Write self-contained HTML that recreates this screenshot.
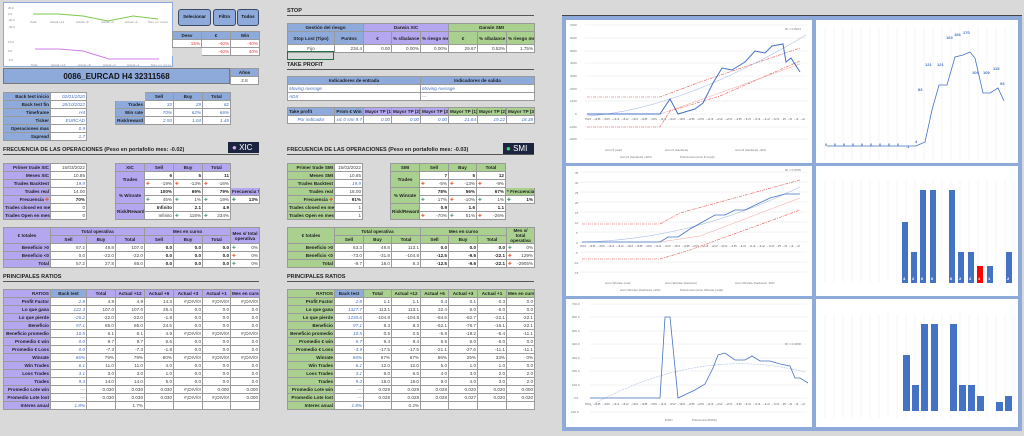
<!DOCTYPE html>
<html><head><meta charset="utf-8">
<style>
*{margin:0;padding:0;box-sizing:border-box}
body{width:1024px;height:436px;background:#d9d9d9;font-family:"Liberation Sans",sans-serif;position:relative;overflow:hidden}
.a{position:absolute}
table{position:absolute;border-collapse:collapse;table-layout:fixed;font-size:4.6px}
td{border:0.5px solid #9a9a9a;height:8px;line-height:7px;padding:0 1px;text-align:right;white-space:nowrap;overflow:hidden;background:#fff;color:#444}
td.l{background:#8eaadb;font-weight:bold;color:#222}
td.p{background:#b4a7f0;font-weight:bold;color:#222;text-align:center}
td.pl{background:#b4a7f0;font-weight:bold;color:#222}
td.g{background:#a9d08e;font-weight:bold;color:#222;text-align:center}
td.gl{background:#a9d08e;font-weight:bold;color:#222}
td.b{background:#8eaadb;font-weight:bold;color:#222;text-align:center}
td.i{color:#4472c4;font-style:italic}
td.r{color:#e04040}
td.k{font-weight:bold;color:#222}
.h{position:absolute;font-size:5.5px;font-weight:bold;color:#222;border-bottom:1px solid #555;padding-bottom:1px}
.btn{position:absolute;background:#8eaadb;border:1.5px solid #3a4a66;border-radius:3px;font-size:4.5px;font-weight:bold;text-align:center;line-height:13px;color:#111}
.w{position:absolute;background:#fff}
</style></head><body>

<div class="w" style="left:3px;top:2px;width:170px;height:65px;border:1px solid #8eaadb"></div>
<svg class="a" style="left:3px;top:2px" width="170" height="65">
<g font-size="3" fill="#888"><text x="5" y="7">20.0</text><text x="5" y="13">0.0</text><text x="5" y="19">-20.0</text><text x="5" y="26">-40.0</text>
<text x="5" y="41">10.0</text><text x="5" y="50">0.0</text><text x="5" y="59">-5.0</text>
<text x="27" y="21">Total</text><text x="47" y="21">Actual +12</text><text x="73" y="21">Actual +6</text><text x="98" y="21">Actual +3</text><text x="122" y="21">Actual +1</text><text x="145" y="21" textLength="20">Mes en curso</text>
<text x="28" y="64">Total</text><text x="48" y="64">Actual +12</text><text x="75" y="64">Actual +6</text><text x="100" y="64">Actual +3</text><text x="124" y="64">Actual +1</text><text x="148" y="64" textLength="20">Mes en curso</text></g>
<polyline points="30,12 55,12 80,14 105,19 130,14 155,17" fill="none" stroke="#7dc94e" stroke-width="1"/>
<polyline points="32,47 56,47 80,49 106,57 130,57 156,57" fill="none" stroke="#d27ee8" stroke-width="1"/>
</svg>

<div class="btn" style="left:178px;top:9px;width:33px;height:17px">Selecionar</div>
<div class="btn" style="left:213px;top:9px;width:23px;height:17px">Filtro</div>
<div class="btn" style="left:237px;top:9px;width:22px;height:17px">Todos</div>

<table style="left:172px;top:31px;width:87px"><colgroup><col style="width:29px"><col style="width:29px"><col style="width:29px"></colgroup>
<tr><td class="b">Desv</td><td class="b">€</td><td class="b">Win</td></tr>
<tr><td class="r">15%</td><td class="r">-40%</td><td class="r">-40%</td></tr>
<tr><td style="background:#d9d9d9;border-color:#d9d9d9"></td><td class="r">-40%</td><td class="r">40%</td></tr></table>

<div class="a" style="left:3px;top:68px;width:227px;height:16px;background:#8eaadb;border:0.5px solid #777;font-size:8px;font-weight:bold;text-align:center;line-height:16px;color:#111">0086_EURCAD H4 32311568</div>
<table style="left:230px;top:68px;width:29px"><tr><td class="b">Años</td></tr><tr><td style="text-align:center">2.8</td></tr></table>

<table style="left:3px;top:92px;width:83px"><colgroup><col style="width:47px"><col style="width:36px"></colgroup>
<tr><td class="l">Back test inicio</td><td class="i">02/01/2020</td></tr>
<tr><td class="l">Back test fin</td><td class="i">28/10/2022</td></tr>
<tr><td class="l">Timeframe</td><td class="i">H4</td></tr>
<tr><td class="l">Ticker</td><td class="i">EURCAD</td></tr>
<tr><td class="l">Operaciones mas</td><td class="i">0.9</td></tr>
<tr><td class="l">Sapread</td><td class="i">1.7</td></tr></table>

<table style="left:115px;top:92px;width:115px"><colgroup><col style="width:29px"><col style="width:29px"><col style="width:29px"><col style="width:28px"></colgroup>
<tr><td style="background:#d9d9d9;border-color:#d9d9d9"></td><td class="b">Sell</td><td class="b">Buy</td><td class="b">Total</td></tr>
<tr><td class="l">Trades</td><td class="i">33</td><td class="i">29</td><td class="i">62</td></tr>
<tr><td class="l">Win rate</td><td class="i">70%</td><td class="i">62%</td><td class="i">66%</td></tr>
<tr><td class="l">Risk/reward</td><td class="i">2.93</td><td class="i">1.04</td><td class="i">1.45</td></tr></table>

<div class="a" style="left:228px;top:142px;width:31px;height:11px;background:#1c2540;color:#fff;font-size:8px;line-height:11px;padding-left:4px"><span style="color:#d8a8f0">●</span> XIC</div>
<div class="h" style="left:3px;top:147px;width:256px">FRECUENCIA DE LAS OPERACIONES (Peso en portafolio mes: -0.02)</div>

<table style="left:3px;top:163px;width:83px"><colgroup><col style="width:47px"><col style="width:36px"></colgroup>
<tr><td class="pl">Primer trade XIC</td><td>15/03/2022</td></tr>
<tr><td class="pl">Meses XIC</td><td>10.85</td></tr>
<tr><td class="pl">Trades Backtest</td><td class="i">19.9</td></tr>
<tr><td class="pl">Trades real</td><td>14.00</td></tr>
<tr><td class="pl">Frecuencia <span style="color:#e05a2a">✚</span></td><td class="k">70%</td></tr>
<tr><td class="pl">Trades closed en mes</td><td>0</td></tr>
<tr><td class="pl">Trades Open en mes</td><td>0</td></tr></table>

<table style="left:115px;top:163px;width:144px"><colgroup><col style="width:29px"><col style="width:29px"><col style="width:29px"><col style="width:28px"><col style="width:29px"></colgroup>
<tr><td class="p">XIC</td><td class="p">Sell</td><td class="p">Buy</td><td class="p">Total</td><td style="background:#d9d9d9;border-color:#d9d9d9"></td></tr>
<tr><td class="p" rowspan="2">Trades</td><td class="k">6</td><td class="k">5</td><td class="k">11</td><td style="background:#d9d9d9;border-color:#d9d9d9"></td></tr>
<tr><td><span style="color:#e05a2a;float:left">✚</span>-19%</td><td><span style="color:#e05a2a;float:left">✚</span>-13%</td><td><span style="color:#e05a2a;float:left">✚</span>-16%</td><td style="background:#d9d9d9;border-color:#d9d9d9"></td></tr>
<tr><td class="p" rowspan="2">% Winrate</td><td class="k">100%</td><td class="k">69%</td><td class="k">79%</td><td class="p">Frecuencia T</td></tr>
<tr><td><span style="color:#4a9a70;float:left">✚</span>45%</td><td><span style="color:#4a9a70;float:left">✚</span>1%</td><td><span style="color:#4a9a70;float:left">✚</span>19%</td><td class="k"><span style="color:#4a9a70;float:left">✚</span>13%</td></tr>
<tr><td class="p" rowspan="2">Risk/Reward</td><td class="k">Infinito</td><td class="k">2.1</td><td class="k">4.9</td><td style="background:#d9d9d9;border-color:#d9d9d9"></td></tr>
<tr><td>Infinito</td><td><span style="color:#4a9a70;float:left">✚</span>118%</td><td><span style="color:#4a9a70;float:left">✚</span>234%</td><td style="background:#d9d9d9;border-color:#d9d9d9"></td></tr></table>

<table style="left:3px;top:227px;width:256px"><colgroup><col style="width:47px"><col style="width:36px"><col style="width:29px"><col style="width:29px"><col style="width:29px"><col style="width:29px"><col style="width:28px"><col style="width:29px"></colgroup>
<tr><td class="p" rowspan="2">€ totales</td><td class="p" colspan="3">Total operativa</td><td class="p" colspan="3">Mes en curso</td><td class="p" rowspan="2" style="white-space:normal;line-height:5px">Mes s/ total operativa</td></tr>
<tr><td class="p">Sell</td><td class="p">Buy</td><td class="p">Total</td><td class="p">Sell</td><td class="p">Buy</td><td class="p">Total</td></tr>
<tr><td class="pl">Beneficio &gt;0</td><td>57.2</td><td>49.8</td><td>107.0</td><td class="k">0.0</td><td class="k">0.0</td><td class="k">0.0</td><td><span style="color:#4a9a70;float:left">✚</span>0%</td></tr>
<tr><td class="pl">Beneficio &lt;0</td><td>0.0</td><td>-22.0</td><td>-22.0</td><td class="k">0.0</td><td class="k">0.0</td><td class="k">0.0</td><td><span style="color:#e05a2a;float:left">✚</span>0%</td></tr>
<tr><td class="pl">Total</td><td>57.2</td><td>27.8</td><td>85.0</td><td class="k">0.0</td><td class="k">0.0</td><td class="k">0.0</td><td><span style="color:#4a9a70;float:left">✚</span>0%</td></tr></table>

<div class="h" style="left:3px;top:274px;width:256px">PRINCIPALES RATIOS</div>

<table style="left:3px;top:289px;width:256px"><colgroup><col style="width:47px"><col style="width:36px"><col style="width:29px"><col style="width:29px"><col style="width:29px"><col style="width:29px"><col style="width:28px"><col style="width:29px"></colgroup>
<tr><td class="pl">RATIOS</td><td class="b">Back test</td><td class="p">Total</td><td class="p">Actual +12</td><td class="p">Actual +6</td><td class="p">Actual +3</td><td class="p">Actual +1</td><td class="p">Mes en curso</td></tr>
<tr><td class="pl">Profit Factor</td><td class="i">2.8</td><td>4.9</td><td>4.9</td><td>14.3</td><td>#¡DIV/0!</td><td>#¡DIV/0!</td><td>#¡DIV/0!</td></tr>
<tr><td class="pl">Lo que gana</td><td class="i">122.3</td><td>107.0</td><td>107.0</td><td>26.4</td><td>0.0</td><td>0.0</td><td>0.0</td></tr>
<tr><td class="pl">Lo que pierde</td><td class="i">-26.2</td><td>-22.0</td><td>-22.0</td><td>-1.8</td><td>0.0</td><td>0.0</td><td>0.0</td></tr>
<tr><td class="pl">Beneficio</td><td class="i">97.1</td><td>85.0</td><td>85.0</td><td>24.5</td><td>0.0</td><td>0.0</td><td>0.0</td></tr>
<tr><td class="pl">Beneficio promedio</td><td class="i">10.5</td><td>6.1</td><td>6.1</td><td>4.9</td><td>#¡DIV/0!</td><td>#¡DIV/0!</td><td>#¡DIV/0!</td></tr>
<tr><td class="pl">Promedio € win</td><td class="i">0.0</td><td>9.7</td><td>9.7</td><td>6.6</td><td>0.0</td><td>0.0</td><td>0.0</td></tr>
<tr><td class="pl">Promedio € Loss</td><td class="i">0.0</td><td>-7.3</td><td>-7.3</td><td>-1.8</td><td>0.0</td><td>0.0</td><td>0.0</td></tr>
<tr><td class="pl">Winrate</td><td class="i">66%</td><td>79%</td><td>79%</td><td>80%</td><td>#¡DIV/0!</td><td>#¡DIV/0!</td><td>#¡DIV/0!</td></tr>
<tr><td class="pl">Win Trades</td><td class="i">6.1</td><td>11.0</td><td>11.0</td><td>4.0</td><td>0.0</td><td>0.0</td><td>0.0</td></tr>
<tr><td class="pl">Loss Trades</td><td class="i">3.1</td><td>3.0</td><td>3.0</td><td>1.0</td><td>0.0</td><td>0.0</td><td>0.0</td></tr>
<tr><td class="pl">Trades</td><td class="i">9.3</td><td>14.0</td><td>14.0</td><td>5.0</td><td>0.0</td><td>0.0</td><td>0.0</td></tr>
<tr><td class="pl">Promedio Lote win</td><td class="i">---</td><td>0.030</td><td>0.030</td><td>0.030</td><td>#¡DIV/0!</td><td>0.000</td><td>0.000</td></tr>
<tr><td class="pl">Promedio Lote lost</td><td class="i">---</td><td>0.030</td><td>0.030</td><td>0.030</td><td>#¡DIV/0!</td><td>#¡DIV/0!</td><td>0.000</td></tr>
<tr><td class="pl">Interes anual</td><td class="i">1.8%</td><td></td><td>1.7%</td><td></td><td></td><td></td><td></td></tr></table>

<div class="h" style="left:287px;top:8px;width:247px">STOP</div>
<table style="left:287px;top:23px;width:247px"><colgroup><col style="width:47px"><col style="width:29px"><col style="width:28px"><col style="width:29px"><col style="width:28px"><col style="width:29px"><col style="width:29px"><col style="width:28px"></colgroup>
<tr><td class="b" colspan="2">Gestión del riesgo</td><td class="p" colspan="3">Darwin XIC</td><td class="g" colspan="3">Darwin SMI</td></tr>
<tr style="height:13px"><td class="b">Stop Lost (Tipo)</td><td class="b">Puntos</td><td class="p">€</td><td class="p">% s/balance</td><td class="p">% riesgo mes</td><td class="g">€</td><td class="g">% s/balance</td><td class="g">% riesgo mes</td></tr>
<tr><td style="text-align:center">Fijo</td><td>234.4</td><td>0.00</td><td>0.00%</td><td>0.00%</td><td>29.67</td><td>0.53%</td><td>1.75%</td></tr></table>
<div class="a" style="left:287px;top:51px;width:47px;height:9px;border:1px solid #217346"></div>
<div class="h" style="left:287px;top:62px;width:247px">TAKE PROFIT</div>
<table style="left:287px;top:76px;width:247px"><colgroup><col style="width:133px"><col style="width:114px"></colgroup>
<tr><td class="b">Indicadores de entrada</td><td class="b">Indicadores de salida</td></tr>
<tr><td class="i" style="text-align:left">Moving Average</td><td class="i" style="text-align:left">Moving Average</td></tr>
<tr><td class="i" style="text-align:left">ADX</td><td class="i" style="text-align:left">---</td></tr></table>
<table style="left:287px;top:107px;width:247px"><colgroup><col style="width:47px"><col style="width:29px"><col style="width:28px"><col style="width:29px"><col style="width:28px"><col style="width:29px"><col style="width:29px"><col style="width:28px"></colgroup>
<tr><td class="l" style="text-align:left">Take profit</td><td class="b">Prom € Win</td><td class="p">Mayor TP (1)</td><td class="p">Mayor TP (2)</td><td class="p">Mayor TP (3)</td><td class="g">Mayor TP (1)</td><td class="g">Mayor TP (2)</td><td class="g">Mayor TP (3)</td></tr>
<tr><td class="i" style="text-align:center">Por indicador</td><td class="i">xic 0 smi 9.7</td><td class="i">0.00</td><td class="i">0.00</td><td class="i">0.00</td><td class="i">21.64</td><td class="i">19.22</td><td class="i">18.38</td></tr></table>

<div class="a" style="left:503px;top:143px;width:31px;height:12px;background:#1c2540;color:#fff;font-size:8px;line-height:12px;padding-left:3px"><span style="color:#3ed46a">●</span> SMI</div>
<div class="h" style="left:287px;top:147px;width:247px">FRECUENCIA DE LAS OPERACIONES (Peso en portafolio mes: -0.03)</div>

<table style="left:287px;top:163px;width:75px"><colgroup><col style="width:47px"><col style="width:28px"></colgroup>
<tr><td class="gl">Primer trade SMI</td><td>15/03/2022</td></tr>
<tr><td class="gl">Meses SMI</td><td>10.85</td></tr>
<tr><td class="gl">Trades Backtest</td><td class="i">19.9</td></tr>
<tr><td class="gl">Trades real</td><td>18.00</td></tr>
<tr><td class="gl">Frecuencia <span style="color:#e05a2a">✚</span></td><td class="k">91%</td></tr>
<tr><td class="gl">Trades closed en mes</td><td>1</td></tr>
<tr><td class="gl">Trades Open en mes</td><td>1</td></tr></table>

<table style="left:390px;top:163px;width:144px"><colgroup><col style="width:29px"><col style="width:29px"><col style="width:28px"><col style="width:29px"><col style="width:29px"></colgroup>
<tr><td class="g">SMI</td><td class="g">Sell</td><td class="g">Buy</td><td class="g">Total</td><td style="background:#d9d9d9;border-color:#d9d9d9"></td></tr>
<tr><td class="g" rowspan="2">Trades</td><td class="k">7</td><td class="k">5</td><td class="k">12</td><td style="background:#d9d9d9;border-color:#d9d9d9"></td></tr>
<tr><td><span style="color:#e05a2a;float:left">✚</span>-5%</td><td><span style="color:#e05a2a;float:left">✚</span>-13%</td><td><span style="color:#e05a2a;float:left">✚</span>-9%</td><td style="background:#d9d9d9;border-color:#d9d9d9"></td></tr>
<tr><td class="g" rowspan="2">% Winrate</td><td class="k">78%</td><td class="k">56%</td><td class="k">67%</td><td class="g">* Frecuencia</td></tr>
<tr><td><span style="color:#4a9a70;float:left">✚</span>17%</td><td><span style="color:#e05a2a;float:left">✚</span>-10%</td><td><span style="color:#4a9a70;float:left">✚</span>1%</td><td class="k"><span style="color:#4a9a70;float:left">✚</span>1%</td></tr>
<tr><td class="g" rowspan="2">Risk/Reward</td><td class="k">0.9</td><td class="k">1.6</td><td class="k">1.1</td><td style="background:#d9d9d9;border-color:#d9d9d9"></td></tr>
<tr><td><span style="color:#e05a2a;float:left">✚</span>-70%</td><td><span style="color:#4a9a70;float:left">✚</span>51%</td><td><span style="color:#e05a2a;float:left">✚</span>-26%</td><td style="background:#d9d9d9;border-color:#d9d9d9"></td></tr></table>

<table style="left:287px;top:227px;width:247px"><colgroup><col style="width:47px"><col style="width:29px"><col style="width:28px"><col style="width:29px"><col style="width:28px"><col style="width:29px"><col style="width:29px"><col style="width:28px"></colgroup>
<tr><td class="g" rowspan="2">€ totales</td><td class="g" colspan="3">Total operativa</td><td class="g" colspan="3">Mes en curso</td><td class="g" rowspan="2" style="white-space:normal;line-height:5px">Mes s/ total operativa</td></tr>
<tr><td class="g">Sell</td><td class="g">Buy</td><td class="g">Total</td><td class="g">Sell</td><td class="g">Buy</td><td class="g">Total</td></tr>
<tr><td class="gl">Beneficio &gt;0</td><td>63.3</td><td>49.8</td><td>113.1</td><td class="k">0.0</td><td class="k">0.0</td><td class="k">0.0</td><td><span style="color:#4a9a70;float:left">✚</span>0%</td></tr>
<tr><td class="gl">Beneficio &lt;0</td><td>-73.0</td><td>-31.8</td><td>-104.8</td><td class="k">-12.5</td><td class="k">-9.6</td><td class="k">-22.1</td><td><span style="color:#e05a2a;float:left">✚</span>129%</td></tr>
<tr><td class="gl">Total</td><td>-9.7</td><td>18.0</td><td>8.3</td><td class="k">-12.5</td><td class="k">-9.6</td><td class="k">-22.1</td><td><span style="color:#e05a2a;float:left">✚</span>-2905%</td></tr></table>

<div class="h" style="left:287px;top:274px;width:247px">PRINCIPALES RATIOS</div>

<table style="left:287px;top:289px;width:247px"><colgroup><col style="width:47px"><col style="width:29px"><col style="width:28px"><col style="width:29px"><col style="width:28px"><col style="width:29px"><col style="width:29px"><col style="width:28px"></colgroup>
<tr><td class="gl">RATIOS</td><td class="b">Back test</td><td class="g">Total</td><td class="g">Actual +12</td><td class="g">Actual +6</td><td class="g">Actual +3</td><td class="g">Actual +1</td><td class="g">Mes en curso</td></tr>
<tr><td class="gl">Profit Factor</td><td class="i">2.8</td><td>1.1</td><td>1.1</td><td>0.4</td><td>0.1</td><td>0.3</td><td>0.0</td></tr>
<tr><td class="gl">Lo que gana</td><td class="i">1327.7</td><td>113.1</td><td>113.1</td><td>32.4</td><td>6.0</td><td>6.0</td><td>0.0</td></tr>
<tr><td class="gl">Lo que pierde</td><td class="i">-1230.6</td><td>-104.8</td><td>-104.8</td><td>-84.5</td><td>-82.7</td><td>-22.1</td><td>-22.1</td></tr>
<tr><td class="gl">Beneficio</td><td class="i">97.1</td><td>8.3</td><td>8.3</td><td>-52.1</td><td>-76.7</td><td>-16.1</td><td>-22.1</td></tr>
<tr><td class="gl">Beneficio promedio</td><td class="i">10.5</td><td>0.5</td><td>0.5</td><td>-5.8</td><td>-19.2</td><td>-5.4</td><td>-11.1</td></tr>
<tr><td class="gl">Promedio € win</td><td class="i">5.7</td><td>9.4</td><td>9.4</td><td>6.5</td><td>6.0</td><td>6.0</td><td>0.0</td></tr>
<tr><td class="gl">Promedio € Loss</td><td class="i">-3.9</td><td>-17.5</td><td>-17.5</td><td>-21.1</td><td>-27.6</td><td>-11.1</td><td>-11.1</td></tr>
<tr><td class="gl">Winrate</td><td class="i">66%</td><td>67%</td><td>67%</td><td>56%</td><td>25%</td><td>33%</td><td>0%</td></tr>
<tr><td class="gl">Win Trades</td><td class="i">6.1</td><td>12.0</td><td>12.0</td><td>5.0</td><td>1.0</td><td>1.0</td><td>0.0</td></tr>
<tr><td class="gl">Loss Trades</td><td class="i">3.1</td><td>6.0</td><td>6.0</td><td>4.0</td><td>3.0</td><td>2.0</td><td>2.0</td></tr>
<tr><td class="gl">Trades</td><td class="i">9.3</td><td>18.0</td><td>18.0</td><td>9.0</td><td>4.0</td><td>3.0</td><td>2.0</td></tr>
<tr><td class="gl">Promedio Lote win</td><td class="i">---</td><td>0.029</td><td>0.029</td><td>0.028</td><td>0.020</td><td>0.020</td><td>0.000</td></tr>
<tr><td class="gl">Promedio Lote lost</td><td class="i">---</td><td>0.028</td><td>0.028</td><td>0.028</td><td>0.027</td><td>0.020</td><td>0.020</td></tr>
<tr><td class="gl">Interes anual</td><td class="i">1.8%</td><td></td><td>0.2%</td><td></td><td></td><td></td><td></td></tr></table>

<div class="a" style="left:562px;top:15px;width:460px;height:416px;background:#8eaadb;border-top:1.5px solid #444"></div>
<div class="w" style="left:566px;top:20px;width:246px;height:143px"></div>
<div class="w" style="left:816px;top:20px;width:202px;height:143px"></div>
<div class="w" style="left:566px;top:166px;width:246px;height:130px"></div>
<div class="w" style="left:816px;top:166px;width:202px;height:130px"></div>
<div class="w" style="left:566px;top:299px;width:246px;height:128px"></div>
<div class="w" style="left:816px;top:299px;width:202px;height:128px"></div>

<svg class="a" style="left:0;top:0" width="1024" height="436">
<g stroke="#e6e6e6" stroke-width="0.5">
<line x1="585" x2="807" y1="25" y2="25"/><line x1="585" x2="807" y1="38" y2="38"/><line x1="585" x2="807" y1="51" y2="51"/><line x1="585" x2="807" y1="63" y2="63"/><line x1="585" x2="807" y1="76" y2="76"/><line x1="585" x2="807" y1="89" y2="89"/><line x1="585" x2="807" y1="101" y2="101"/><line x1="585" x2="807" y1="114" y2="114"/><line x1="585" x2="807" y1="127" y2="127"/><line x1="585" x2="807" y1="139" y2="139"/>
<line x1="580" x2="807" y1="172" y2="172"/><line x1="580" x2="807" y1="182" y2="182"/><line x1="580" x2="807" y1="192" y2="192"/><line x1="580" x2="807" y1="202" y2="202"/><line x1="580" x2="807" y1="212" y2="212"/><line x1="580" x2="807" y1="222" y2="222"/><line x1="580" x2="807" y1="232" y2="232"/><line x1="580" x2="807" y1="242" y2="242"/><line x1="580" x2="807" y1="252" y2="252"/><line x1="580" x2="807" y1="262" y2="262"/><line x1="580" x2="807" y1="272" y2="272"/>
<line x1="590" x2="807" y1="304" y2="304"/><line x1="590" x2="807" y1="317" y2="317"/><line x1="590" x2="807" y1="331" y2="331"/><line x1="590" x2="807" y1="344" y2="344"/><line x1="590" x2="807" y1="358" y2="358"/><line x1="590" x2="807" y1="371" y2="371"/><line x1="590" x2="807" y1="385" y2="385"/><line x1="590" x2="807" y1="398" y2="398"/><line x1="590" x2="807" y1="412" y2="412"/>
</g>
<g stroke="#ececec" stroke-width="0.5">
<path d="M825 27V160M834 27V160M843 27V160M852 27V160M861 27V160M870 27V160M879 27V160M888 27V160M897 27V160M906 27V160M915 27V160M924 27V160M933 27V160M942 27V160M951 27V160M960 27V160M969 27V160M978 27V160M987 27V160M996 27V160M1005 27V160"/>
<path d="M825 180V282M834 180V282M843 180V282M852 180V282M861 180V282M870 180V282M879 180V282M888 180V282M897 180V282M906 180V282M915 180V282M924 180V282M933 180V282M942 180V282M951 180V282M960 180V282M969 180V282M978 180V282M987 180V282M996 180V282M1005 180V282M1014 180V282"/>
<path d="M825 314V418M834 314V418M843 314V418M852 314V418M861 314V418M870 314V418M879 314V418M888 314V418M897 314V418M906 314V418M915 314V418M924 314V418M933 314V418M942 314V418M951 314V418M960 314V418M969 314V418M978 314V418M987 314V418M996 314V418M1005 314V418M1014 314V418"/>
</g>
<g font-size="3" fill="#777">
<text x="570" y="26">7000</text><text x="570" y="39">6000</text><text x="570" y="52">5000</text><text x="570" y="64">4000</text><text x="570" y="77">3000</text><text x="570" y="90">2000</text><text x="570" y="102">1000</text><text x="575" y="115">0</text><text x="569" y="128">-1000</text><text x="569" y="140">-2000</text>
<text x="585" y="120" textLength="220" lengthAdjust="spacingAndGlyphs">50 -48 -46 -44 -42 -40 -38 -36 -34 -32 -30 -28 -26 -24 -22 -20 -18 -16 -14 -12 -10 -8 -6 -4 -2</text>
<text x="785" y="30">R² = 0.8224</text><text x="785" y="171">R² = 0.5795</text><text x="785" y="345">R² = 0.3158</text>
<text x="575" y="174">35</text><text x="575" y="184">30</text><text x="575" y="194">25</text><text x="575" y="204">20</text><text x="575" y="214">15</text><text x="575" y="224">10</text><text x="576" y="234">5</text><text x="576" y="244">0</text><text x="575" y="254">-5</text><text x="574" y="264">-10</text><text x="574" y="274">-15</text>
<text x="580" y="247" textLength="220" lengthAdjust="spacingAndGlyphs">50 -48 -46 -44 -42 -40 -38 -36 -34 -32 -30 -28 -26 -24 -22 -20 -18 -16 -14 -12 -10 -8 -6 -4 -2</text>
<text x="572" y="305">700.0</text><text x="572" y="318">600.0</text><text x="572" y="332">500.0</text><text x="572" y="345">400.0</text><text x="572" y="359">300.0</text><text x="572" y="372">200.0</text><text x="572" y="386">100.0</text><text x="574" y="399">0.0</text><text x="570" y="413">-100.0</text>
<text x="585" y="405" textLength="220" lengthAdjust="spacingAndGlyphs">50 -48 -46 -44 -42 -40 -38 -36 -34 -32 -30 -28 -26 -24 -22 -20 -18 -16 -14 -12 -10 -8 -6 -4 -2</text>
<text x="605" y="151">Accu € (real)</text><text x="665" y="151">Accu € (backtest)</text><text x="735" y="151">Accu € (backtest) -40%</text><text x="620" y="158">Accu € (backtest) +40%</text><text x="680" y="158">Polinómica (Accu € (real))</text>
<text x="605" y="284">Accu Winrate (real)</text><text x="665" y="284">Accu Winrate (backtest)</text><text x="735" y="284">Accu Winrate (backtest) -40%</text><text x="620" y="291">Accu Winrate (backtest) +40%</text><text x="680" y="291">Polinómica (Accu Winrate (real))</text>
<text x="665" y="421">€/Win</text><text x="692" y="421">Polinómica (€/Win)</text>
</g>
<polyline points="587,127 660,127 670,111 720,96 800,61" fill="none" stroke="#e85050" stroke-width="0.6" stroke-dasharray="3,1,1,1"/>
<polyline points="587,97 660,97 700,82 800,48" fill="none" stroke="#e85050" stroke-width="0.6" stroke-dasharray="3,1,1,1"/>
<polyline points="660,114 700,100 800,64" fill="none" stroke="#f3a0a0" stroke-width="0.5"/>
<path d="M587,116 Q680,110 806,35" fill="none" stroke="#a8bde8" stroke-width="0.6"/>
<polyline points="587,114 660,114 670,99 678,114 695,109 703,103 713,83 722,68 732,70 745,62 755,51 765,53 772,46 783,44 786,62 791,58 800,72" fill="none" stroke="#4472c4" stroke-width="1"/>
<polyline points="827,146 835,146 844,146 853,146 862,146 871,146 880,146 889,146 898,146 907,146 916,146 925,142 932,110 939,85 947,85 955,57 963,55 970,52 975,58 983,93 990,93 998,88 1004,101" fill="none" stroke="#4472c4" stroke-width="0.8"/>
<g font-size="4" fill="#4472c4" font-weight="bold">
<text x="825" y="146">0</text><text x="834" y="146">0</text><text x="843" y="146">0</text><text x="852" y="146">0</text><text x="861" y="146">0</text><text x="870" y="146">0</text><text x="879" y="146">0</text><text x="888" y="146">0</text><text x="897" y="146">0</text><text x="906" y="148">-1</text><text x="915" y="143">4</text>
<text x="918" y="91">83</text><text x="925" y="66">121</text><text x="937" y="66">121</text><text x="946" y="39">163</text><text x="954" y="36">166</text><text x="963" y="34">170</text><text x="972" y="74">109</text><text x="983" y="74">109</text><text x="993" y="70">115</text><text x="1000" y="85">93</text>
</g>
<polyline points="582,224 660,224 680,213 800,180" fill="none" stroke="#e85050" stroke-width="0.6" stroke-dasharray="3,1,1,1"/>
<polyline points="582,259 660,259 690,250 800,210" fill="none" stroke="#e85050" stroke-width="0.6" stroke-dasharray="3,1,1,1"/>
<polyline points="660,242 700,236 800,198" fill="none" stroke="#f3a0a0" stroke-width="0.5"/>
<path d="M582,242 Q690,240 800,187" fill="none" stroke="#a8bde8" stroke-width="0.6"/>
<polyline points="582,242 660,242 668,237 678,237 690,229 715,215 725,215 735,210 745,210 770,198 785,194 800,194" fill="none" stroke="#4472c4" stroke-width="0.8"/>
<g fill="#4472c4"><rect x="902" y="222" width="6" height="61"/><rect x="911" y="252" width="6" height="31"/><rect x="920" y="190" width="6" height="93"/><rect x="930" y="190" width="6" height="93"/><rect x="949" y="190" width="6" height="93"/><rect x="958" y="252" width="6" height="31"/><rect x="968" y="252" width="6" height="31"/><rect x="987" y="266" width="6" height="17"/><rect x="1006" y="252" width="6" height="31"/></g>
<rect x="977" y="266" width="6" height="17" fill="#ff0000"/>
<g font-size="4" fill="#fff" font-weight="bold"><text x="903" y="280">4</text><text x="912" y="280">2</text><text x="921" y="280">6</text><text x="931" y="280">6</text><text x="950" y="280">6</text><text x="959" y="280">2</text><text x="969" y="280">2</text><text x="978" y="280">4</text><text x="988" y="280">1</text><text x="1007" y="280">2</text></g>
<path d="M590,406 Q700,345 805,372" fill="none" stroke="#a8bde8" stroke-width="0.6" stroke-dasharray="2,1"/>
<polyline points="590,398 660,398 665,317 670,317 678,398 695,390 705,384 713,368 718,355 725,353 735,360 745,360 752,356 760,361 770,361 780,364 790,366 795,378 800,378 808,383" fill="none" stroke="#4472c4" stroke-width="0.8"/>
<g fill="#4472c4"><rect x="903" y="355" width="7" height="56"/><rect x="912" y="385" width="7" height="26"/><rect x="921" y="324" width="7" height="87"/><rect x="931" y="324" width="7" height="87"/><rect x="950" y="324" width="7" height="87"/><rect x="959" y="385" width="7" height="26"/><rect x="968" y="385" width="7" height="26"/><rect x="977" y="396" width="7" height="15"/><rect x="996" y="402" width="7" height="9"/><rect x="1005" y="396" width="7" height="15"/></g>
</svg>
</body></html>
